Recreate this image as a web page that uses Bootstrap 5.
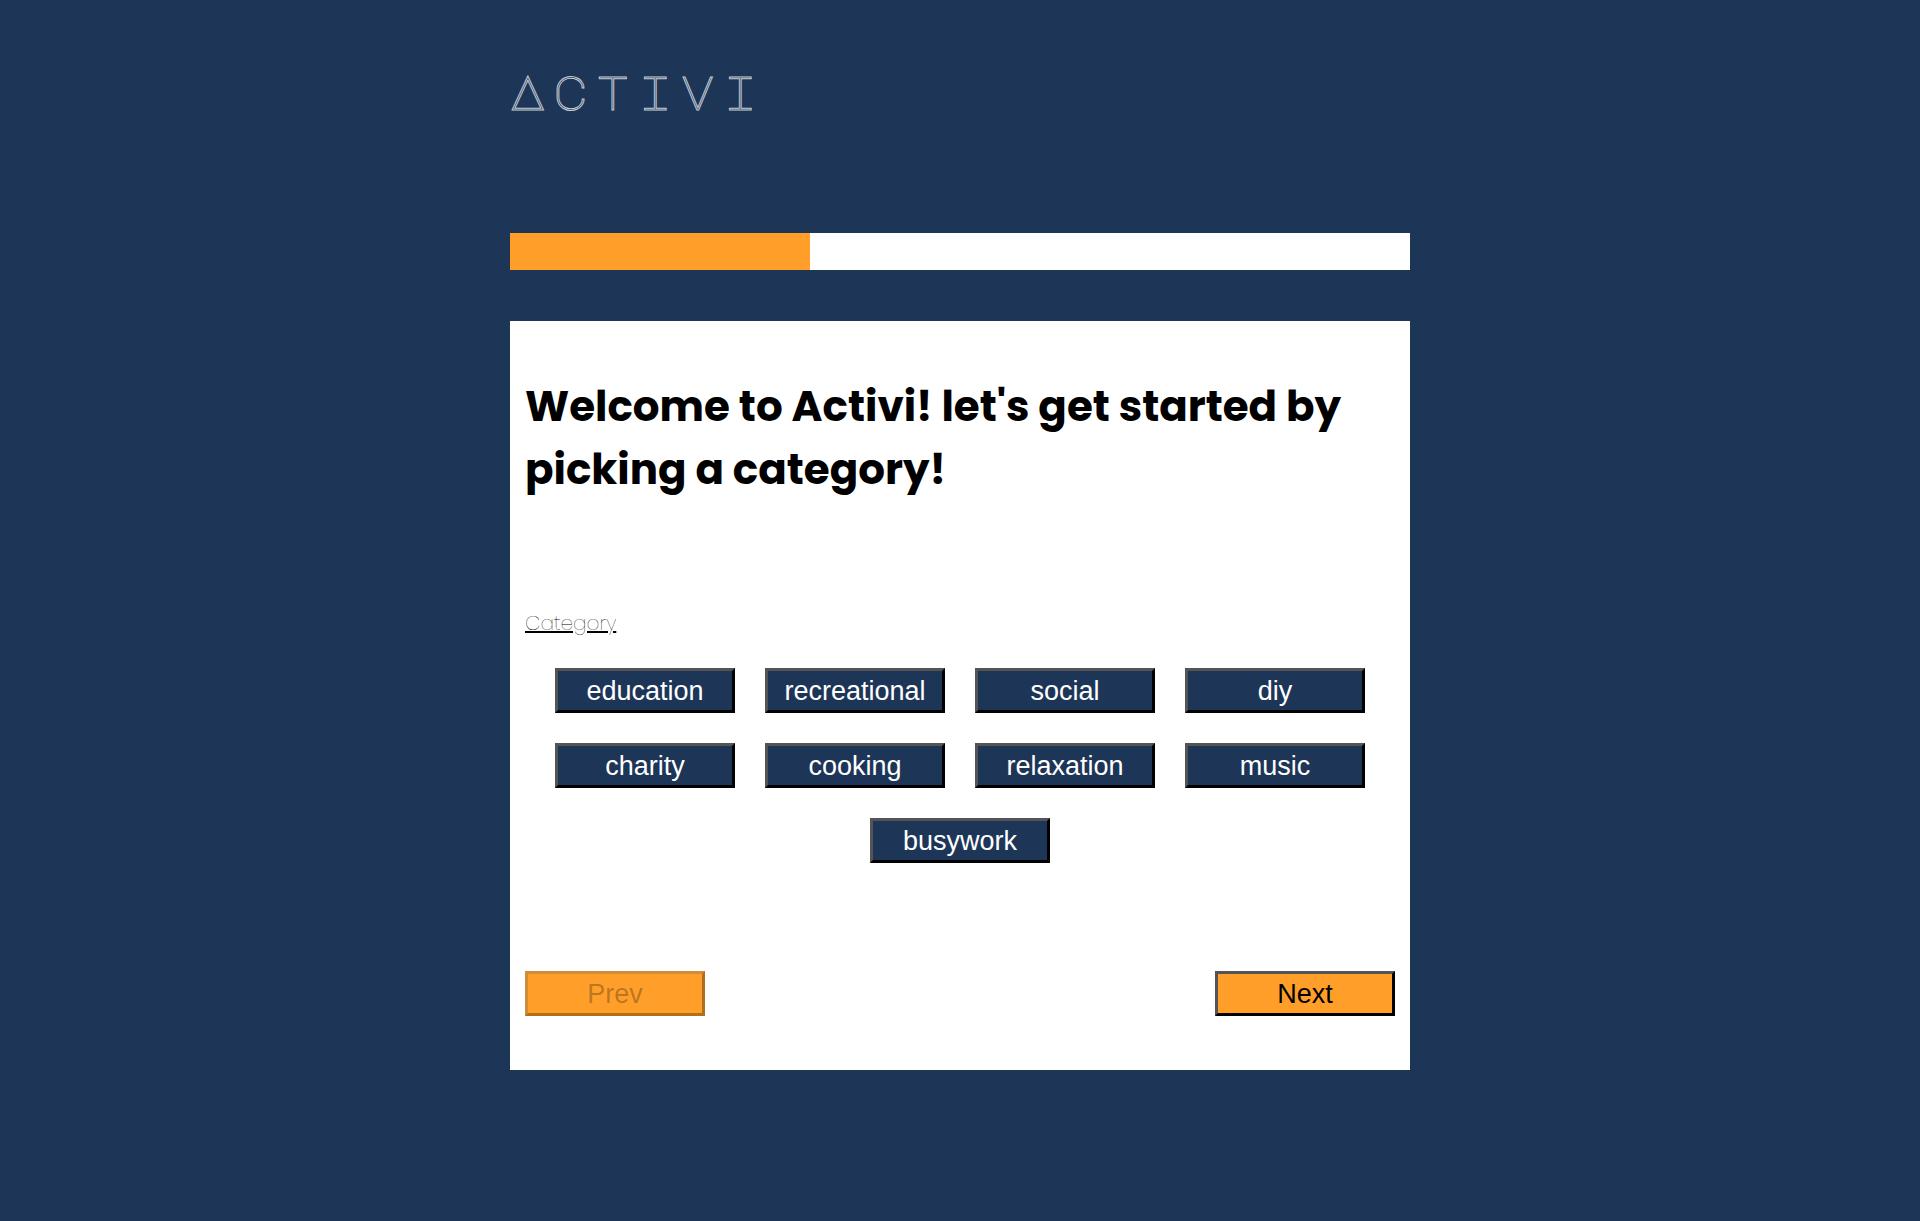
<!DOCTYPE html>
<html lang="en">
<head>
<meta charset="utf-8">
<meta name="viewport" content="width=device-width, initial-scale=1">
<title>Activi</title>
<link href="https://cdn.jsdelivr.net/npm/bootstrap@5.3.0/dist/css/bootstrap.min.css" rel="stylesheet">
<style>
  body { background: #1d3557; color: #000; font-family: Poppins, Inter, sans-serif; }
  .app-shell { max-width: 900px; }
  .brand-bar { padding: 61px 0 112px; }
  .brand-name {
    font: 400 48px/60px "Major Mono Display", "Liberation Mono", monospace;
    letter-spacing: 7px;
    color: #1d3557;
    -webkit-text-stroke: 1px #c3cad3;
  }
  .step-track { height: 37px; margin-bottom: 51px; background: #fff; border-radius: 0; }
  .step-fill { background: #ff9f29; }
  .wizard { padding: 54px 15px; }
  .wizard-title { margin: 0 0 106px; font-size: 42px; line-height: 63px; font-weight: 700; }
  .group-label { margin: 0 0 29px; font-size: 20px; line-height: 32px; font-weight: 200; }
  .choices { gap: 30px; }
  .wizard-nav { margin-top: 108px; }
  .key {
    width: 180px; height: 45px; padding: 0;
    border: 3px outset #000; border-radius: 0;
    font: 27px/36px "Liberation Sans", Arial, sans-serif;
  }
  .key-navy, .key-navy:hover { background: #1d3557; color: #fff; border-color: #000; }
  .key-orange, .key-orange:hover { background: #ff9f29; color: #000; border-color: #000; }
  .key-orange:disabled { background: #ff9f29; color: rgba(16,16,16,.3); border-color: rgba(16,16,16,.3); opacity: 1; }
</style>
</head>
<body>
<div class="app-shell container-fluid p-0">
  <header class="brand-bar">
    <div class="brand-name">Activi</div>
  </header>
  <div class="progress step-track" role="progressbar" aria-label="Step 1 of 3" aria-valuenow="33" aria-valuemin="0" aria-valuemax="100">
    <div class="progress-bar step-fill" style="width: 33.333%"></div>
  </div>
  <main class="wizard bg-white">
    <h1 class="wizard-title">Welcome to Activi! let's get started by picking a category!</h1>
    <section aria-labelledby="group-label">
      <p class="group-label text-decoration-underline" id="group-label">Category</p>
      <div class="choices d-flex flex-wrap justify-content-center">
        <button type="button" class="btn key key-navy">education</button>
        <button type="button" class="btn key key-navy">recreational</button>
        <button type="button" class="btn key key-navy">social</button>
        <button type="button" class="btn key key-navy">diy</button>
        <button type="button" class="btn key key-navy">charity</button>
        <button type="button" class="btn key key-navy">cooking</button>
        <button type="button" class="btn key key-navy">relaxation</button>
        <button type="button" class="btn key key-navy">music</button>
        <button type="button" class="btn key key-navy">busywork</button>
      </div>
    </section>
    <nav class="wizard-nav d-flex justify-content-between" aria-label="Steps">
      <button type="button" class="btn key key-orange" disabled>Prev</button>
      <button type="button" class="btn key key-orange">Next</button>
    </nav>
  </main>
</div>
<script src="https://cdn.jsdelivr.net/npm/bootstrap@5.3.0/dist/js/bootstrap.bundle.min.js"></script>
</body>
</html>
